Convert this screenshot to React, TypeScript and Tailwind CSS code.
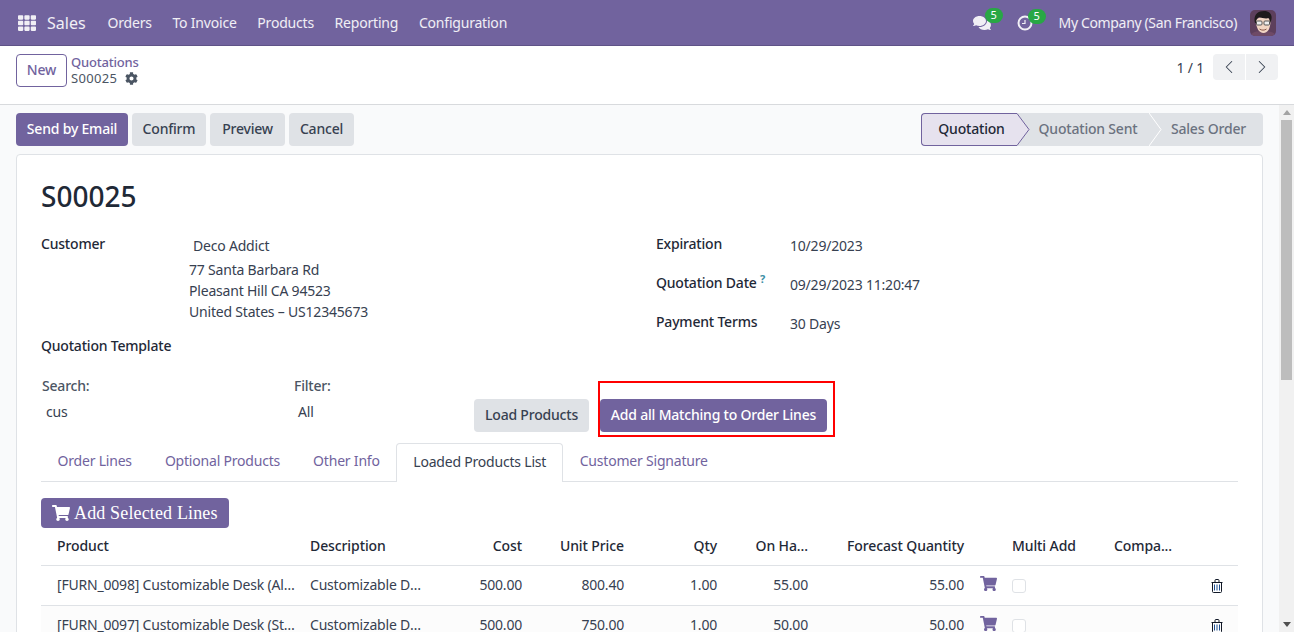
import { FaTh, FaCog, FaComments, FaShoppingCart } from 'react-icons/fa';
import { ChevronLeft, ChevronRight } from 'lucide-react';

const navItems = ['Orders', 'To Invoice', 'Products', 'Reporting', 'Configuration'];
const tabs = ['Order Lines', 'Optional Products', 'Other Info', 'Loaded Products List', 'Customer Signature'];
const rows = [
  { name: '[FURN_0098] Customizable Desk (Aluminium, White)', cost: '500.00', price: '800.40', qty: '1.00', hand: '55.00', forecast: '55.00' },
  { name: '[FURN_0097] Customizable Desk (Steel, White)', cost: '500.00', price: '750.00', qty: '1.00', hand: '50.00', forecast: '50.00' },
];

function Badge({ n, className }: { n: number; className: string }) {
  return (
    <span className={`absolute -top-[6px] flex h-[15px] w-[18px] items-center justify-center rounded-full bg-[#28a745] text-[11px] text-white ${className}`}>
      {n}
    </span>
  );
}

function Avatar() {
  return (
    <svg viewBox="0 0 26 26" className="h-[26px] w-[26px] rounded-[5px]">
      <rect width="26" height="26" fill="#5d3f5c" />
      <path d="M0 26c2-4 6-5 13-5s11 1 13 5z" fill="#6e4a66" />
      <path d="M6 11c0 7 3 12 7.500 12s7-5 7-12c0-5-14.500-5-14.500 0z" fill="#f2d6c4" />
      <path d="M5 13C3 6 7 1 14 1c6 0 9 4 7 10l-1 2-1-5c-3 1-7 0-10-1-2 1-3 3-3 6z" fill="#1f1b1c" />
      <rect x="6.500" y="11" width="5.500" height="4" rx="1" fill="#eee" stroke="#555" strokeWidth="1" />
      <rect x="14" y="11" width="5.500" height="4" rx="1" fill="#eee" stroke="#555" strokeWidth="1" />
      <path d="M9.500 19c2 1.500 5 1.500 7 0" stroke="#8a5a4a" strokeWidth="1" fill="none" />
    </svg>
  );
}

function TrashIcon() {
  return (
    <svg viewBox="0 0 12 14" className="ml-[31px] h-[14px] w-[12px]" fill="none">
      <path d="M0.500 3.500h11M4 3.500V1.500q0-1 1-1h2q1 0 1 1v2" stroke="#111827" />
      <path d="M1.500 3.500v9q0 1 1 1h7q1 0 1-1v-9" stroke="#111827" />
      <path d="M3.500 5.500v6M6 5.500v6M8.500 5.500v6" stroke="#1d4f91" />
    </svg>
  );
}

export default function App() {
  return (
    <div className="flex h-[632px] w-[1294px] flex-col overflow-hidden bg-white font-['Noto_Sans',sans-serif] text-[14px] tracking-[-0.2px] text-[#374151]">
      <header className="flex h-[46px] shrink-0 items-center border-b border-[#5f5387] bg-[#71639e] pl-[18px] pr-[18px] text-[14px] text-white/90">
        <FaTh className="h-[18px] w-[18px] text-white/90" />
        <span className="ml-[11px] text-[16px] tracking-[0px]">Sales</span>
        <nav className="ml-[22px] flex gap-[20.7px]">
          {navItems.map((item) => (
            <span key={item}>{item}</span>
          ))}
        </nav>
        <div className="ml-auto flex items-center">
          <div className="relative">
            <FaComments className="h-[18px] w-[18px] text-white/90" />
            <Badge n={5} className="left-[12px]" />
          </div>
          <div className="relative ml-[26px]">
            <svg viewBox="0 0 16 16" className="h-4 w-4" fill="none" stroke="rgba(255,255,255,.9)">
              <circle cx="8" cy="8" r="6.500" strokeWidth="2" />
              <path d="M8 5v3.500H5" strokeWidth="1.200" />
            </svg>
            <Badge n={5} className="left-[11px]" />
          </div>
          <span className="ml-[26px] tracking-[-0.35px]">My Company (San Francisco)</span>
          <div className="ml-[13px]">
            <Avatar />
          </div>
        </div>
      </header>

      <div className="flex h-[59px] shrink-0 border-b border-[#d8dadd] bg-white pl-[16px] pr-[16px] pt-[8px]">
        <button className="h-[33px] w-[51px] rounded border border-[#71639e] pb-[2px] font-medium text-[#71639e]">New</button>
        <div className="ml-[4px] flex flex-col text-[13px] leading-[16px]">
          <span className="font-medium text-[#71639e]">Quotations</span>
          <span className="flex items-center gap-[8px] tracking-[0.3px] text-[#4b5563]">
            S00025 <FaCog className="h-[13px] w-[13px]" />
          </span>
        </div>
        <div className="ml-auto flex h-[26px] items-center">
          <span className="mr-[9px]">1 / 1</span>
          <div className="flex h-[26px] gap-px">
            <span className="flex w-[32px] items-center justify-center rounded-l bg-[#f0f1f3]">
              <ChevronLeft className="h-[22px] w-[22px]" strokeWidth={1.1} />
            </span>
            <span className="flex w-[32px] items-center justify-center rounded-r bg-[#f0f1f3]">
              <ChevronRight className="h-[22px] w-[22px]" strokeWidth={1.1} />
            </span>
          </div>
        </div>
      </div>

      <div className="flex min-h-0 flex-1 bg-[#f9fafb]">
        <main className="min-w-0 flex-1 overflow-hidden px-[16px] pt-[8px]">
          <div className="flex h-[33px] items-stretch font-medium">
            <button className="w-[112px] rounded bg-[#71639e] pb-[2px] text-white">Send by Email</button>
            <button className="ml-[4px] w-[74px] rounded bg-[#dfe2e6] pb-[2px]">Confirm</button>
            <button className="ml-[4px] w-[75px] rounded bg-[#dfe2e6] pb-[2px]">Preview</button>
            <button className="ml-[4px] w-[65px] rounded bg-[#dfe2e6] pb-[2px]">Cancel</button>
            <div className="ml-auto flex w-[342px] rounded bg-[#dfe2e6]">
              <div className="relative flex w-[96px] items-center justify-center rounded-l border border-r-0 border-[#71639e] bg-[#e6e2ee] pb-[2px] pl-[4px] text-[#1f2937]">
                Quotation
                <svg viewBox="0 0 13 33" className="absolute -right-[13px] -top-px h-[33px] w-[13px]">
                  <path d="M0 0.500L12 16.500L0 32.500" fill="#e6e2ee" stroke="#71639e" />
                </svg>
              </div>
              <div className="relative flex w-[132px] items-center justify-center pb-[2px] pl-[10px] text-[#6b7280]">
                Quotation Sent
                <svg viewBox="0 0 13 33" className="absolute -right-[13px] top-0 h-[33px] w-[13px]">
                  <path d="M0 0L12 16.500L0 33" fill="none" stroke="#fff" />
                </svg>
              </div>
              <div className="flex flex-1 items-center justify-end pb-[2px] pr-[17px] text-[#6b7280]">Sales Order</div>
            </div>
          </div>

          <section className="mt-[8px] h-[600px] rounded-t border border-[#dfe2e6] bg-white px-[24px] pt-[23px]">
            <h1 className="h-[36px] text-[28px] font-medium leading-[36px] tracking-normal text-[#1f2937]">S00025</h1>

            <div className="mt-[19px] flex h-[103px]">
              <div className="w-[615px]">
                <div className="flex">
                  <span className="w-[148px] pt-[1px] font-medium leading-[20px] text-[#1f2937]">Customer</span>
                  <div className="leading-[21px]">
                    <div className="pl-[4px] pt-[2px]">Deco Addict</div>
                    <div className="mt-[3px]">77 Santa Barbara Rd</div>
                    <div>Pleasant Hill CA 94523</div>
                    <div>United States – US12345673</div>
                  </div>
                </div>
              </div>
              <div className="flex flex-col gap-[19px]">
                <div className="flex h-[20px]">
                  <span className="w-[134px] font-medium text-[#1f2937]">Expiration</span>
                  <span className="pt-[2px]">10/29/2023</span>
                </div>
                <div className="flex h-[20px]">
                  <span className="w-[134px] font-medium text-[#1f2937]">
                    Quotation Date <sup className="text-[11px] font-bold text-[#3b8ea5]">?</sup>
                  </span>
                  <span className="pt-[2px]">09/29/2023 11:20:47</span>
                </div>
                <div className="flex h-[20px]">
                  <span className="w-[134px] font-medium text-[#1f2937]">Payment Terms</span>
                  <span className="pt-[2px]">30 Days</span>
                </div>
              </div>
            </div>

            <div className="font-medium leading-[20px] text-[#1f2937]">Quotation Template</div>

            <div className="mt-[20px] flex h-[56px] items-start pl-[1px]">
              <div className="w-[252px]">
                <div className="font-medium leading-[20px] text-[#4b5563]">Search:</div>
                <div className="mt-[6px] pl-[4px] leading-[20px]">cus</div>
              </div>
              <div className="w-[180px]">
                <div className="font-medium leading-[20px] text-[#4b5563]">Filter:</div>
                <div className="mt-[6px] pl-[4px] leading-[20px]">All</div>
              </div>
              <div className="mt-[23px] flex h-[33px] gap-[11px] font-medium">
                <button className="w-[115px] rounded bg-[#dfe2e6] pb-[2px]">Load Products</button>
                <div className="relative">
                  <button className="h-[33px] w-[227px] rounded bg-[#71639e] pb-[2px] text-white">Add all Matching to Order Lines</button>
                  <div className="absolute -bottom-[5px] -left-[2px] -right-[8px] -top-[18px] border-2 border-[#f00]" />
                </div>
              </div>
            </div>

            <div className="mt-[11px] flex h-[39px] border-b border-[#dfe2e6] text-[#71639e]">
              {tabs.map((tab) => (
                <span
                  key={tab}
                  className={
                    tab === 'Loaded Products List'
                      ? 'flex h-[39px] items-center rounded-t border border-b-0 border-[#dfe2e6] bg-white px-[16px] pb-[4px] text-[#374151]'
                      : 'flex h-[38px] items-center border border-transparent px-[15.5px] pb-[3px]'
                  }
                >
                  {tab}
                </span>
              ))}
            </div>

            <button className="mt-[16px] flex h-[30px] w-[188px] items-center gap-[4px] rounded bg-[#71639e] pl-[11px] font-['Liberation_Serif',serif] text-[18px] tracking-[0.15px] text-white">
              <FaShoppingCart className="h-[18px] w-[18px]" /> Add Selected Lines
            </button>

            <table className="w-[1197px] table-fixed border-collapse">
              <colgroup>
                <col className="w-[261px]" />
                <col className="w-[128px]" />
                <col className="w-[100px]" />
                <col className="w-[102px]" />
                <col className="w-[93px]" />
                <col className="w-[91px]" />
                <col className="w-[156px]" />
                <col className="w-[32px]" />
                <col className="w-[102px]" />
                <col className="w-[74px]" />
                <col className="w-[58px]" />
              </colgroup>
              <thead className="font-medium tracking-[-0.1px] text-[#1f2937]">
                <tr className="h-[37px] border-b border-[#dfe2e6]">
                  <th className="pb-[2px] pl-[16px] text-left font-medium">Product</th>
                  <th className="pb-[2px] pl-[8px] text-left font-medium">Description</th>
                  <th className="pb-[2px] pr-[8px] text-right font-medium">Cost</th>
                  <th className="pb-[2px] pr-[8px] text-right font-medium">Unit Price</th>
                  <th className="pb-[2px] pr-[8px] text-right font-medium">Qty</th>
                  <th className="pb-[2px] pr-[8px] text-right font-medium">On Ha...</th>
                  <th className="pb-[2px] pr-[8px] text-right font-medium">Forecast Quantity</th>
                  <th />
                  <th className="pb-[2px] pl-[8px] text-left font-medium">Multi Add</th>
                  <th className="pb-[2px] pl-[8px] text-left font-medium">Compa...</th>
                  <th />
                </tr>
              </thead>
              <tbody>
                {rows.map((row, i) => (
                  <tr key={row.name} className={i % 2 ? 'h-[40px] border-b border-[#dfe2e6] bg-[#fcfcfc]' : 'h-[40px] border-b border-[#dfe2e6]'}>
                    <td className="truncate pb-[2px] pl-[16px] pr-[2px]">{row.name}</td>
                    <td className="truncate pb-[2px] pl-[8px] pr-[4px]">Customizable Desk</td>
                    <td className="pb-[2px] pr-[8px] text-right">{row.cost}</td>
                    <td className="pb-[2px] pr-[8px] text-right">{row.price}</td>
                    <td className="pb-[2px] pr-[8px] text-right">{row.qty}</td>
                    <td className="pb-[2px] pr-[8px] text-right">{row.hand}</td>
                    <td className="pb-[2px] pr-[8px] text-right">{row.forecast}</td>
                    <td>
                      <FaShoppingCart className="mb-[3px] ml-[8px] h-[17px] w-[17px] text-[#71639e]" />
                    </td>
                    <td className="pl-[8px] pt-[2px]">
                      <span className="block h-[14px] w-[14px] rounded-[3px] border border-[#dfe2e6] bg-white" />
                    </td>
                    <td />
                    <td className="pt-[2px]">
                      <TrashIcon />
                    </td>
                  </tr>
                ))}
              </tbody>
            </table>
          </section>
        </main>

        <div className="flex w-[15px] shrink-0 flex-col items-center bg-[#f1f1f1]">
          <span className="mt-[5px] h-0 w-0 border-x-[4px] border-b-[5px] border-x-transparent border-b-[#a3a3a3]" />
          <div className="mt-[5px] h-[260px] w-[11px] bg-[#bdbdbd]" />
          <span className="mb-[5px] mt-auto h-0 w-0 border-x-[4px] border-t-[5px] border-x-transparent border-t-[#505050]" />
        </div>
      </div>
    </div>
  );
}
